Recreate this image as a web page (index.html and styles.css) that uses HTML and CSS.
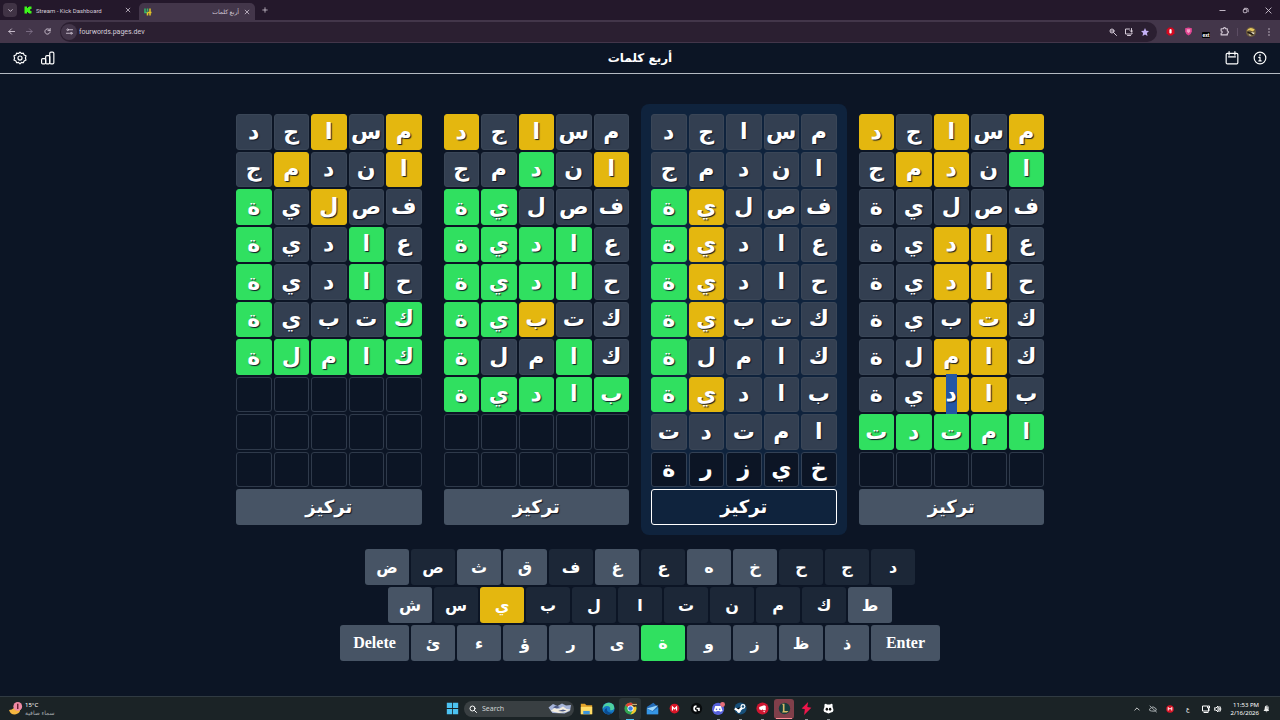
FILE: index.html
```html
<!DOCTYPE html>
<html lang="ar">
<head>
    <meta charset="UTF-8">
    <meta name="viewport" content="width=device-width, initial-scale=1">
    <title>أربع كلمات</title>
    <link rel="stylesheet" href="styles.css">
</head>
<body>

    <!-- browser -->
    <div class="browser">
        <div class="tabs">
            <button class="tab-search" aria-label="Search tabs"><svg viewBox="0 0 16 16" class="icon small"><path d="M4 6l4 4 4-4"/></svg></button>
            <div class="tab">
                <svg viewBox="0 0 16 16" class="favicon"><path fill="#3df51b" d="M1 1h5v3h2V2h2V1h5v5h-2v1h-1v2h1v1h2v5h-5v-1H8v-2H6v3H1z"/></svg>
                <span class="tab-title">Stream - Kick Dashboard</span>
                <button class="tab-close" aria-label="Close tab"><svg viewBox="0 0 16 16" class="icon small"><path d="M3 3l10 10M13 3L3 13"/></svg></button>
            </div>
            <div class="tab active">
                <svg viewBox="0 0 16 16" class="favicon"><g fill="none" stroke-width="3"><path stroke="#35b86b" d="M2 1v8h5"/><path stroke="#e4c527" d="M7 9h8M12 9v6"/><path stroke="#35b86b" d="M7 1v6"/><path stroke="#e4c527" d="M12 1v8M7 9v6"/></g></svg>
                <span class="tab-title" dir="rtl">أربع كلمات</span>
                <button class="tab-close" aria-label="Close tab"><svg viewBox="0 0 16 16" class="icon small"><path d="M3 3l10 10M13 3L3 13"/></svg></button>
            </div>
            <button class="new-tab" aria-label="New tab"><svg viewBox="0 0 16 16" class="icon small"><path d="M8 2v12M2 8h12"/></svg></button>
            <div class="window-buttons">
                <button aria-label="Minimize"><svg viewBox="0 0 16 16" class="icon small"><path d="M2 8h12"/></svg></button>
                <button aria-label="Restore"><svg viewBox="0 0 16 16" class="icon small"><rect x="3" y="5" width="8" height="8" rx="2"/><path d="M6 3h5q3 0 3 3v5"/></svg></button>
                <button aria-label="Close"><svg viewBox="0 0 16 16" class="icon small"><path d="M2 2l12 12M14 2L2 14"/></svg></button>
            </div>
        </div>
        <div class="toolbar">
            <button aria-label="Back"><svg viewBox="0 0 16 16" class="icon small"><path d="M15 8H2M8 2L2 8l6 6"/></svg></button>
            <button class="dim" aria-label="Forward"><svg viewBox="0 0 16 16" class="icon small"><path d="M1 8h13M8 2l6 6-6 6"/></svg></button>
            <button aria-label="Reload"><svg viewBox="0 0 16 16" class="icon small"><path d="M14 9a6 6 0 1 1-2-5.500l2 2M14 1v5H9"/></svg></button>
            <div class="address">
                <button class="site-info" aria-label="Site information"><svg viewBox="0 0 16 16" class="icon small"><circle cx="4" cy="4" r="2"/><path d="M8 4h7M1 12h7"/><circle cx="12" cy="12" r="2"/></svg></button>
                <input type="text" class="url" aria-label="Address" value="fourwords.pages.dev">
                <button aria-label="Zoom"><svg viewBox="0 0 16 16" class="icon favicon"><circle cx="6" cy="6" r="4"/><path d="M9 9l6 6M4 6h4"/></svg></button>
                <button aria-label="Install"><svg viewBox="0 0 16 16" class="icon favicon"><path d="M9 2H1v10h13v-2M5 15h6M13 1v7M10 5l3 3 3-3"/></svg></button>
                <button aria-label="Bookmark"><svg viewBox="0 0 16 16" class="favicon"><path fill="#c4b1f4" d="M8 0l2.400 5.400 5.600.6-4.200 3.900L13 16l-5-3-5 3 1.200-6.100L0 6l5.600-.6z"/></svg></button>
            </div>
            <div class="extensions">
                <button aria-label="Ad blocker"><svg viewBox="0 0 16 16" class="badge"><path fill="#d5081f" d="M5 1h6l4 4v6l-4 4H5l-4-4V5z"/><path fill="#fff" d="M6 5q2-3 4 0v5q-2 3-4 0z"/></svg></button>
                <button aria-label="Shield"><svg viewBox="0 0 16 16" class="badge"><path fill="#e04391" d="M2 2l6-1 6 1v6q-1 5-6 7-5-2-6-7z"/><path fill="#f59fc5" d="M5 4h6v4l-3 3-3-3z"/></svg></button>
                <button class="extension-text" aria-label="Extension"><span>ext</span></button>
                <button aria-label="Extensions"><svg viewBox="0 0 16 16" class="icon puzzle"><path d="M2 3h4q0-2 2-2t2 2h3v4q2 0 2 2t-2 2v3H2v-3q2 0 2-2T2 7z"/></svg></button>
                <span class="separator"></span>
                <button aria-label="Profile"><svg viewBox="0 0 16 16" class="avatar"><circle cx="8" cy="8" r="8" fill="#6b5a3c"/><path fill="#e7c860" d="M1 6q5-8 13-2l-3 3-5-2z"/><path fill="#1d1813" d="M3 7l10 4-1 2-10-4z"/><path fill="#eee6c9" d="M8 8l6 1-2 3zM4 11l5 2-3 1z"/></svg></button>
                <button aria-label="Menu"><svg viewBox="0 0 16 16" class="favicon"><g fill="#cfc6d2"><circle cx="8" cy="2" r="1.500"/><circle cx="8" cy="8" r="1.500"/><circle cx="8" cy="14" r="1.500"/></g></svg></button>
            </div>
        </div>
    </div>

    <!-- game -->
    <header class="header">
        <div class="header-buttons">
            <button aria-label="الإعدادات"><svg viewBox="0 0 24 24" class="icon large"><path d="M12 2l2.500 2.300 3.300-.7 1.200 3.200 3.300 1.400-1 3.800 1 3.500-3.300 1.500-1.200 3.200-3.300-.6L12 22l-2.500-2.400-3.300.6L5 17l-3.300-1.500 1-3.500-1-3.800L5 6.800l1.200-3.200 3.300.7z"/><circle cx="12" cy="12" r="3.500"/></svg></button>
            <button aria-label="الإحصائيات"><svg viewBox="0 0 24 24" class="icon large"><rect x="1" y="13" width="7" height="9" rx="2"/><rect x="8" y="8" width="7" height="14" rx="2"/><rect x="15" y="2" width="7" height="20" rx="2"/></svg></button>
        </div>
        <h1>أربع كلمات</h1>
        <div class="header-buttons end">
            <button aria-label="الأرشيف"><svg viewBox="0 0 24 24" class="icon large"><rect x="2" y="4" width="20" height="18" rx="2"/><path d="M6 10h12M7 1v6M17 1v6"/></svg></button>
            <button aria-label="معلومات"><svg viewBox="0 0 24 24" class="icon large"><circle cx="12" cy="12" r="10"/><path d="M10 11h2v6M10 17h4M12 6v2"/></svg></button>
        </div>
    </header>

    <main class="game">
        <div id="boards" class="boards"></div>
        <div id="keyboard" class="keyboard"></div>
    </main>

    <!-- taskbar -->
    <footer class="taskbar">
        <div class="weather">
            <svg viewBox="0 0 16 16" class="weather-icon"><path fill="#f4b53f" d="M8 1q-1 8-8 8 2 6 8 5 6-2 5-9z"/><circle cx="10" cy="5" r="5" fill="#f08aa5"/><path stroke="#5a1528" stroke-width="1.500" d="M10 2v6"/></svg>
            <div>
                <div>15°C</div>
                <div class="muted" dir="rtl">سماء صافية</div>
            </div>
        </div>
        <div class="apps">
            <button class="app" aria-label="Start"><svg viewBox="0 0 16 16"><path fill="#4cc2f1" d="M1 1h6.500v6.500H1zM8.500 1H15v6.500H8.500zM1 8.500h6.500V15H1zM8.500 8.500H15V15H8.500z"/></svg></button>
            <label class="search">
                <svg viewBox="0 0 16 16" class="icon favicon"><circle cx="7" cy="7" r="5"/><path d="M11 11l4 4"/></svg>
                <input type="text" placeholder="Search" aria-label="Search">
                <svg viewBox="0 0 48 24" class="search-art"><path fill="#a6b4d8" d="M1 9l9-7 9 4 9-5 8 4 10-1-2 12-11 5-24-1z"/><path fill="#f3eddf" d="M5 16l8-6 9 2 8-5 7 5 8 1-8 5-15 2z"/><path fill="#4e5b87" d="M10 9l6-4 8 3-6 3zM20 16l10-3 7 2-7 2z"/></svg>
            </label>
            <button class="app" aria-label="File Explorer"><svg viewBox="0 0 16 16"><path fill="#e2a32b" d="M1 2h5l2 2h7v11H1z"/><path fill="#ffdc66" d="M1 6h14v9H1z"/><path fill="#3c94db" d="M4 11h8v4H4z"/></svg></button>
            <button class="app" aria-label="Edge"><svg viewBox="0 0 16 16"><circle cx="8" cy="8" r="7.500" fill="#1679c6"/><path fill="#4fd0a0" d="M1 6q3-6 9-5 5 1 5 7-1 3-5 2 1-5-4-5-3 0-5 3z"/><path fill="#0c4c91" d="M6 7q-1 7 7 6-5 5-10 0-1-4 3-6z"/></svg></button>
            <button class="app open current" aria-label="Chrome"><svg viewBox="0 0 16 16"><circle cx="8" cy="8" r="7.500" fill="#31a852"/><path fill="#e34234" d="M8 8L1.500 4.200Q4 .5 8 .5t6.500 3.700z"/><path fill="#f9c62c" d="M8 4h6.500q3 9-6.500 11.500L11 10z"/><circle cx="8" cy="8" r="3.700" fill="#fff"/><circle cx="8" cy="8" r="2.800" fill="#3c7de2"/><circle cx="13" cy="3" r="3" fill="#443524"/><path stroke="#e4d49a" d="M10 3h6"/></svg></button>
            <button class="app" aria-label="Mail"><svg viewBox="0 0 16 16"><path fill="#236bb6" d="M1 6l8-5 6 5v9H1z"/><path fill="#9ed7fa" d="M1 8l14-4-7 7z"/><path fill="#3596e6" d="M1 8l7 4 7-5v8H1z"/></svg></button>
            <button class="app" aria-label="Mega"><svg viewBox="0 0 16 16"><circle cx="8" cy="8" r="6" fill="#d91527"/><path fill="none" stroke="#fff" stroke-width="1.500" d="M5.500 10.500V6L8 8.500 10.500 6v4.500"/></svg></button>
            <button class="app" aria-label="Logitech G"><svg viewBox="0 0 16 16"><circle cx="8" cy="8" r="7" fill="#080b0d"/><path fill="none" stroke="#fff" stroke-width="2" d="M8 5a3 3 0 0 0 0 6M8 8h3v3"/></svg></button>
            <button class="app open" aria-label="Discord"><svg viewBox="0 0 16 16"><circle cx="7.500" cy="8.500" r="7.500" fill="#5661dc"/><path fill="#fff" d="M4 5h7l2 6-3 1-1-1H6l-1 1-3-1z"/><circle cx="5.500" cy="9" r="1" fill="#5661dc"/><circle cx="9.500" cy="9" r="1" fill="#5661dc"/><circle cx="13" cy="3" r="3" fill="#e86f79"/></svg></button>
            <button class="app open" aria-label="Steam"><svg viewBox="0 0 16 16"><circle cx="8" cy="8" r="7.500" fill="#174f79"/><path stroke="#fff" stroke-width="3" d="M1 8l5 3 5-5"/><circle cx="11" cy="5.500" r="3" fill="#fff"/><circle cx="11" cy="5.500" r="1.500" fill="#174f79"/><circle cx="6" cy="11.500" r="2" fill="#fff"/></svg></button>
            <button class="app open" aria-label="Riot Client"><svg viewBox="0 0 16 16"><circle cx="8" cy="8" r="7.500" fill="#cf1631"/><path fill="#fff" d="M4 6l6-2 2 1v5H9l-1-1-1 1-3-1zM8 11l3 .5V13z"/></svg></button>
            <button class="app open alert" aria-label="League of Legends"><svg viewBox="0 0 16 16"><circle cx="8" cy="8" r="7" fill="#173e3c"/><path fill="#d6b968" d="M5 2h3v9h5l-2 2H5l1-2V4z"/></svg></button>
            <button class="app open" aria-label="Bolt"><svg viewBox="0 0 16 16"><path fill="#ee164b" d="M10 0L2 8l4 1-1 7 9-9-5-1z"/></svg></button>
            <button class="app open" aria-label="Panda"><svg viewBox="0 0 16 16"><path fill="#fff" d="M3 3q2-2 3 0h4q2-2 3 0v3q3 6-2 7l-3 1-3-1q-5-1-2-7z"/><ellipse cx="6" cy="9" rx="1.500" ry="1.800" fill="#111"/><ellipse cx="10" cy="9" rx="1.500" ry="1.800" fill="#111"/></svg></button>
        </div>
        <div class="tray">
            <svg viewBox="0 0 16 16" class="icon tiny"><path d="M2 11l6-6 6 6"/></svg>
            <svg viewBox="0 0 16 16" class="icon tray-icon muted"><path d="M4 12q-4 0-3-4l3-2q4-5 8 0 4 1 2 5l-2 1zM2 2l13 12"/></svg>
            <svg viewBox="0 0 16 16" class="tray-icon"><circle cx="8" cy="8" r="7.500" fill="#d91527"/><path fill="none" stroke="#fff" stroke-width="2" d="M4.500 11V5L8 8.500 11.500 5v6"/></svg>
            <span class="language">ع</span>
            <div class="tray-group">
                <svg viewBox="0 0 16 16" class="icon tray-icon"><path d="M10 2H1v10h13V8M4 15h8M12 2h3v4h-3zM13 6v6"/></svg>
                <svg viewBox="0 0 16 16" class="icon tray-icon"><path d="M1 6h3l4-4v12l-4-4H1zM10 5q2 3 0 6M12 3q4 5 0 10"/></svg>
            </div>
            <div class="clock">
                <div>11:53 PM</div>
                <div>2/16/2026</div>
            </div>
            <svg viewBox="0 0 16 16" class="tray-icon"><path fill="#eee" d="M4 3q4-4 8 1l-1 5 1 3H1l2-3zM5 13h4q-2 3-4 0z"/><path stroke="#232a2f" d="M7 3h4M7 6h4M12 1v5"/></svg>
        </div>
    </footer>

    <script src="script.js"></script>
</body>
</html>
```
FILE: styles.css
```css
* {
    box-sizing: border-box;
}

body {
    margin: 0;
    min-height: 100vh;
    display: flex;
    flex-direction: column;
    background-color: #0c1525;
    color: white;
    font-family: "DejaVu Sans", sans-serif;
}

button {
    display: flex;
    align-items: center;
    justify-content: center;
    padding: 0;
    border: none;
    background: none;
    color: inherit;
    font: inherit;
    cursor: pointer;
}

input {
    min-width: 0;
    padding: 0;
    border: none;
    background: none;
    color: inherit;
    font: inherit;
}

svg {
    display: block;
    flex: none;
}

.icon {
    fill: none;
    stroke: currentColor;
    stroke-width: 2;
    stroke-linecap: round;
    stroke-linejoin: round;
}

.tiny {
    width: 6px;
    height: 6px;
}

.small {
    width: 7px;
    height: 7px;
}

.large {
    width: 14px;
    height: 14px;
}

.favicon {
    width: 8px;
    height: 8px;
}

/* browser */
.browser {
    background-color: #24182b;
    color: #d6ccd9;
    font-family: Roboto, "DejaVu Sans", sans-serif;
    font-size: 7px;
}

.tabs {
    display: flex;
    align-items: center;
    height: 20px;
    padding-left: 3px;
    font-size: 6px;
}

.tab-search {
    width: 14px;
    height: 14px;
    border-radius: 4px;
    background-color: #403345;
}

.tab {
    display: flex;
    align-items: center;
    gap: 4px;
    width: 108px;
    height: 14px;
    margin-left: 7px;
}

.tab.active {
    width: 116px;
    height: 17px;
    align-self: flex-end;
    padding: 0 4px 0 5px;
    border-radius: 5px 5px 0 0;
    background-color: #43364a;
}

.tab-title {
    flex: 1;
    white-space: nowrap;
}

.tab-close {
    width: 8px;
    height: 8px;
}

.tab-close .icon {
    width: 6px;
    height: 6px;
}

.new-tab {
    width: 20px;
    height: 14px;
}

.new-tab .icon {
    width: 6px;
    height: 6px;
}

.window-buttons {
    display: flex;
    margin-left: auto;
}

.window-buttons button {
    width: 23px;
    height: 20px;
}

.toolbar {
    display: flex;
    align-items: center;
    height: 23px;
    padding: 0 2px;
    background-color: #43364a;
}

.toolbar button {
    width: 18px;
    height: 16px;
}

.toolbar .dim {
    color: #81748a;
}

.address {
    display: flex;
    align-items: center;
    flex: 1;
    height: 20px;
    margin-left: 4px;
    padding: 0 4px 0 1px;
    border-radius: 10px;
    background-color: #2b1f31;
}

.toolbar .address button {
    width: 16px;
}

.toolbar .site-info {
    border-radius: 8px;
    background-color: #43364a;
}

.url {
    flex: 1;
    margin-left: 2px;
}

.extensions {
    display: flex;
    align-items: center;
    margin-left: 4px;
}

.badge {
    width: 9px;
    height: 9px;
}

.puzzle {
    width: 9px;
    height: 9px;
}

.extension-text span {
    margin-top: 6px;
    padding: 0 1px;
    border-radius: 1px;
    background-color: black;
    color: white;
    font-size: 5px;
    font-weight: bold;
    line-height: 6px;
}

.separator {
    width: 1px;
    height: 8px;
    margin: 0 4px;
    background-color: #5c4d63;
}

.avatar {
    width: 10px;
    height: 10px;
}

/* header */
.header {
    display: grid;
    grid-template-columns: 1fr auto 1fr;
    align-items: center;
    height: 31px;
    padding: 0 13px;
    border-bottom: 1px solid #b4bac3;
}

.header h1 {
    margin: 0;
    font-size: 12px;
    line-height: 24px;
}

.header-buttons {
    display: flex;
    gap: 14px;
}

.header-buttons.end {
    justify-content: flex-end;
}

/* boards */
.game {
    flex: 1;
    padding-top: 30px;
}

.boards {
    display: grid;
    grid-template-columns: repeat(4, minmax(0, 1fr));
    gap: 2px;
    max-width: 828px;
    margin: 0 auto;
}

.board {
    display: grid;
    grid-template-columns: repeat(5, minmax(0, 1fr));
    gap: 2px;
    padding: 10px;
    border-radius: 8px;
    direction: rtl;
}

.board.focused {
    background-color: #0f233d;
}

.tile {
    display: flex;
    align-items: center;
    justify-content: center;
    aspect-ratio: 1;
    min-height: 0;
    border: 1px solid #3a4657;
    border-radius: 3px;
    font-size: 22px;
    font-weight: bold;
    line-height: 32px;
    text-shadow: 1px 1px 1px #111827;
}

.tile.empty {
    border-color: #2f3a4b;
}

.tile.typed {
    border-color: #334155;
    background-color: #0c1525;
}

.absent {
    background-color: #333f51;
}

.tile.present {
    border-color: #e4b70f;
    background-color: #e4b70f;
}

.tile.correct {
    border-color: #30e060;
    background-color: #30e060;
}

.selected {
    padding: 4px 0;
    background-color: #2356a5;
}

.focus-button {
    grid-column: 1 / -1;
    height: 36px;
    border-radius: 3px;
    background-color: #475465;
    font-size: 18px;
    font-weight: bold;
    line-height: 32px;
    text-shadow: 1px 1px 1px #111827;
}

.focused .focus-button {
    border: 1px solid white;
    background-color: #0f233d;
}

/* keyboard */
.keyboard {
    display: flex;
    flex-direction: column;
    gap: 2px;
    margin-top: 14px;
}

.keyboard-row {
    display: flex;
    justify-content: center;
    gap: 2px;
}

.key {
    width: 44px;
    height: 36px;
    border-radius: 3px;
    background-color: #475465;
    font-size: 16px;
    font-weight: bold;
}

.key.wide {
    width: 69px;
    font-family: "Liberation Serif", serif;
}

.key.absent {
    background-color: #1c2737;
}

.key.present {
    background-color: #e4b70f;
}

.key.correct {
    background-color: #30e060;
}

/* taskbar */
.taskbar {
    display: grid;
    grid-template-columns: 1fr auto 1fr;
    align-items: center;
    height: 24px;
    border-top: 1px solid #303a42;
    background-color: #1b2326;
    font-family: "Noto Sans", "DejaVu Sans", sans-serif;
    font-size: 6px;
    line-height: 8px;
}

.weather {
    display: flex;
    align-items: center;
    gap: 2px;
    padding-left: 9px;
}

.weather-icon {
    width: 14px;
    height: 14px;
}

.muted {
    color: #a5abae;
}

.apps {
    display: flex;
    align-items: center;
}

.app {
    position: relative;
    width: 22px;
    height: 22px;
    border-radius: 3px;
}

.app svg {
    width: 13px;
    height: 13px;
}

.app.current {
    background-color: #2a3336;
}

.app.alert {
    width: 20px;
    height: 20px;
    margin: 0 1px;
    background-color: #803f4a;
}

/* running indicator under the icon */
.app.open::after {
    content: "";
    position: absolute;
    bottom: 0;
    width: 3px;
    height: 1px;
    background-color: #8b9498;
}

.app.current::after {
    width: 8px;
    background-color: #4cc2f1;
}

.app.alert::after {
    width: 16px;
    background-color: #ff8d96;
}

.search {
    display: flex;
    align-items: center;
    gap: 5px;
    width: 110px;
    height: 16px;
    margin: 0 1px;
    padding: 0 2px 0 5px;
    border-radius: 8px;
    background-color: #393f42;
    font-size: 7px;
}

.search input {
    flex: 1;
}

.search input::placeholder {
    color: #d0d4d5;
}

.search-art {
    width: 24px;
    height: 12px;
}

.tray {
    display: flex;
    align-items: center;
    justify-content: flex-end;
    gap: 9px;
    padding-right: 9px;
}

.language {
    padding: 0 3px;
}

.tray-icon {
    width: 8px;
    height: 8px;
}

.tray-group {
    display: flex;
    gap: 4px;
}

.clock {
    text-align: right;
}

.clock + .tray-icon {
    margin-left: -5px;
}
```
FILE: script.js
```js
const words = ['مساجد', 'اندمج', 'فصلية', 'عادية', 'حادية', 'كتبية', 'كاملة', 'بادية', 'امتدت'];
const typedWord = 'خيزرة';
const nRows = 10;
const nCols = 5;

// one string per guess: g = correct, y = present, . = absent
const boards = [
    { marks: ['y.y..', 'y..y.', '..y.g', '.g..g', '.g..g', 'g...g', 'ggggg'] },
    { marks: ['..y.y', 'y.g..', '...gg', '.gggg', '.gggg', '..ygg', '.g..g', 'ggggg'] },
    { marks: ['.....', '.....', '...yg', '...yg', '...yg', '...yg', '....g', '...yg', '.....'], focused: true },
    { marks: ['y.y.y', 'g.yy.', '.....', '.yy..', '.yy..', '.y...', '.yy..', '.yy..', 'ggggg'], selected: '7-2' }
];

const keyboard = [
    'ض. ص- ث. ق. ف- غ. ع- ه. خ. ح- ج- د-',
    'ش. س- يy ب- ل- ا- ت- ن- م- ك- ط.',
    'Delete. ئ. ء. ؤ. ر. ى. ةg و. ز. ظ. ذ. Enter.'
];

const markClass = { g: 'correct', y: 'present', '.': 'absent' };
const keyClass = { g: 'correct', y: 'present', '-': 'absent', '.': 'unused' };

const boardsEl = document.getElementById('boards');
boards.forEach(b => {
    const board = document.createElement('section');
    board.className = b.focused ? 'board focused' : 'board';

    for (let r = 0; r < nRows; r++) {
        for (let c = 0; c < nCols; c++) {
            const tile = document.createElement('div');
            if (r < b.marks.length) {
                tile.className = `tile ${markClass[b.marks[r][c]]}`;
                const letter = document.createElement('span');
                letter.textContent = words[r][c];
                if (b.selected === `${r}-${c}`) letter.className = 'selected';
                tile.appendChild(letter);
            } else if (b.focused) {
                tile.className = 'tile typed';
                tile.textContent = typedWord[c];
            } else {
                tile.className = 'tile empty';
            }
            board.appendChild(tile);
        }
    }

    const button = document.createElement('button');
    button.className = 'focus-button';
    button.textContent = 'تركيز';
    board.appendChild(button);
    boardsEl.appendChild(board);
});

const keyboardEl = document.getElementById('keyboard');
keyboard.forEach(line => {
    const row = document.createElement('div');
    row.className = 'keyboard-row';
    line.split(' ').forEach(item => {
        const label = item.slice(0, -1);
        const key = document.createElement('button');
        key.className = `key ${keyClass[item.slice(-1)]}`;
        if (label.length > 1) key.classList.add('wide');
        key.textContent = label;
        row.appendChild(key);
    });
    keyboardEl.appendChild(row);
});
```
